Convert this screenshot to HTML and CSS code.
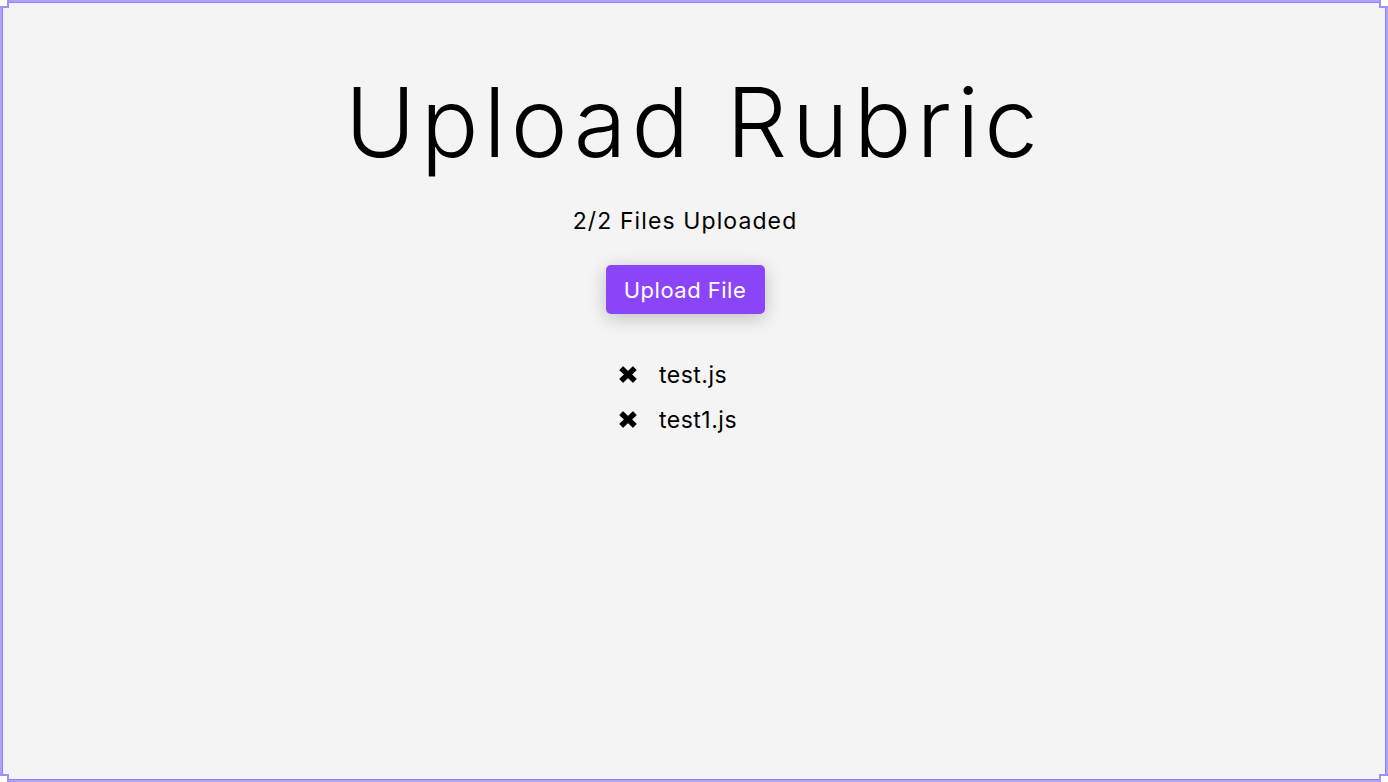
FILE: index.html
```html
<!DOCTYPE html>
<html lang="en">
<head>
<meta charset="utf-8">
<title>Upload Rubric</title>
<link rel="stylesheet" href="styles.css">
</head>
<body>
<div class="frame">
  <span class="corner tl"></span>
  <span class="corner tr"></span>
  <span class="corner bl"></span>
  <span class="corner br"></span>
  <main class="content">
    <h1 class="title">Upload Rubric</h1>
    <section class="uploader">
      <p class="status">2/2 Files Uploaded</p>
      <button class="upload-btn" type="button">Upload File</button>
      <ul class="file-list">
        <li class="file-item">
          <svg class="remove-icon" viewBox="-1 -1 20 19" width="18" height="17" aria-hidden="true">
            <path d="M0 3.5 L3.5 0 L9 5.3 L14.5 0 L18 3.5 L12.6 8.5 L18 13.5 L14.5 17 L9 11.7 L3.5 17 L0 13.5 L5.4 8.5 Z" fill="#000" stroke="#000" stroke-width="1.2" stroke-linejoin="round"/>
          </svg>
          <span class="file-name">test.js</span>
        </li>
        <li class="file-item">
          <svg class="remove-icon" viewBox="-1 -1 20 19" width="18" height="17" aria-hidden="true">
            <path d="M0 3.5 L3.5 0 L9 5.3 L14.5 0 L18 3.5 L12.6 8.5 L18 13.5 L14.5 17 L9 11.7 L3.5 17 L0 13.5 L5.4 8.5 Z" fill="#000" stroke="#000" stroke-width="1.2" stroke-linejoin="round"/>
          </svg>
          <span class="file-name">test1.js</span>
        </li>
      </ul>
    </section>
  </main>
</div>
</body>
</html>
```

FILE: styles.css
```css
html {
  background: #ffffff;
}

body {
  margin: 0;
  font-family: "Inter", "DejaVu Sans", sans-serif;
  color: #000;
}

.frame {
  position: relative;
  box-sizing: border-box;
  height: 782px;
  background: #f4f4f4;
  border: 2px solid #ada2ff;
  box-shadow: inset 1px 1px 0 #8f80ff, inset -1px -1px 0 #8f80ff;
}

.corner {
  position: absolute;
  width: 7px;
  height: 6px;
  background: #ffffff;
}

.corner.tl {
  top: -2px;
  left: -2px;
  border-right: 2px solid #9d90ff;
  border-bottom: 2px solid #9d90ff;
}

.corner.tr {
  top: -2px;
  right: -2px;
  border-left: 2px solid #9d90ff;
  border-bottom: 2px solid #9d90ff;
}

.corner.bl {
  bottom: -2px;
  left: -2px;
  border-right: 2px solid #9d90ff;
  border-top: 2px solid #9d90ff;
}

.corner.br {
  bottom: -2px;
  right: -2px;
  border-left: 2px solid #9d90ff;
  border-top: 2px solid #9d90ff;
}

.content {
  display: flex;
  flex-direction: column;
  align-items: center;
  padding-top: 62px;
}

.title {
  margin: 0;
  font-size: 96px;
  line-height: 116px;
  font-weight: 300;
  letter-spacing: 5px;
}

.uploader {
  display: flex;
  flex-direction: column;
  align-items: center;
  padding-right: 18px;
}

.status {
  margin: 27px 0 0;
  font-size: 23px;
  line-height: 28px;
  font-weight: 400;
  letter-spacing: 1.1px;
}

.upload-btn {
  margin-top: 30px;
  width: 159px;
  height: 49px;
  border: none;
  border-radius: 5px;
  background: #8b45f9;
  color: #ffffff;
  font-family: inherit;
  font-size: 22px;
  font-weight: 400;
  letter-spacing: 0.5px;
  box-shadow: 0 4px 18px rgba(0, 0, 0, 0.22);
  cursor: pointer;
}

.file-list {
  list-style: none;
  margin: 38px 0 0;
  padding: 0 14px 0 0;
}

.file-item {
  display: flex;
  align-items: center;
  gap: 22px;
  height: 45px;
}

.remove-icon {
  flex: none;
}

.file-name {
  font-size: 23px;
  letter-spacing: 0.5px;
}
```
